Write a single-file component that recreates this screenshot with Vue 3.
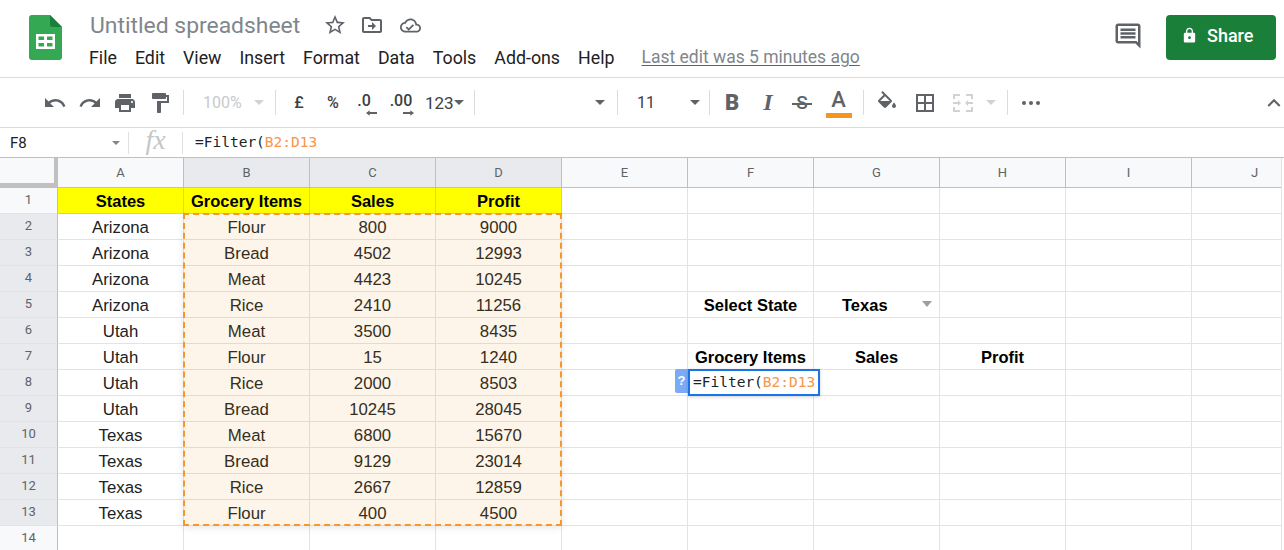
<script setup>
const menus = ['File', 'Edit', 'View', 'Insert', 'Format', 'Data', 'Tools', 'Add-ons', 'Help']
const columns = ['A', 'B', 'C', 'D', 'E', 'F', 'G', 'H', 'I', 'J']
const data = [
  ['Arizona', 'Flour', '800', '9000'],
  ['Arizona', 'Bread', '4502', '12993'],
  ['Arizona', 'Meat', '4423', '10245'],
  ['Arizona', 'Rice', '2410', '11256'],
  ['Utah', 'Meat', '3500', '8435'],
  ['Utah', 'Flour', '15', '1240'],
  ['Utah', 'Rice', '2000', '8503'],
  ['Utah', 'Bread', '10245', '28045'],
  ['Texas', 'Meat', '6800', '15670'],
  ['Texas', 'Bread', '9129', '23014'],
  ['Texas', 'Rice', '2667', '12859'],
  ['Texas', 'Flour', '400', '4500']
]
const rows = Array.from({ length: 14 }, (_, r) => {
  const cells = Array(10).fill('').map(() => ({ text: '', cls: '' }))
  if (r === 0) {
    ;['States', 'Grocery Items', 'Sales', 'Profit'].forEach((t, i) => {
      cells[i] = { text: t, cls: 'bold yellow' }
    })
  } else if (r <= 12) {
    data[r - 1].forEach((t, i) => {
      cells[i] = { text: t, cls: '' }
    })
  }
  if (r === 4) {
    cells[5] = { text: 'Select State', cls: 'bold' }
    cells[6] = { text: 'Texas', cls: 'bold drop' }
  }
  if (r === 6) {
    cells[5] = { text: 'Grocery Items', cls: 'bold' }
    cells[6] = { text: 'Sales', cls: 'bold' }
    cells[7] = { text: 'Profit', cls: 'bold' }
  }
  return cells
})
</script>

<template>
  <div class="app">
    <header class="top">
      <svg class="logo" viewBox="0 0 33 45" width="33" height="45">
        <path d="M3 0H21L33 12V42a3 3 0 0 1-3 3H3a3 3 0 0 1-3-3V3a3 3 0 0 1 3-3z" fill="#34a853" />
        <path d="M21 0L33 12H23a2 2 0 0 1-2-2z" fill="#188038" />
        <path d="M7 19H26V34H7zM9.5 21.5V25H15V21.5zM18 21.5V25H23.5V21.5zM9.5 28V31.5H15V28zM18 28V31.5H23.5V28z" fill="#fff" fill-rule="evenodd" />
      </svg>
      <div class="titles">
        <div class="title-row">
          <span class="doc-title">Untitled spreadsheet</span>
          <svg class="ic star" viewBox="0 0 24 24" width="24" height="24"><path d="M22 9.24l-7.19-.62L12 2 9.19 8.63 2 9.24l5.46 4.73L5.82 21 12 17.27 18.18 21l-1.63-7.03L22 9.24zM12 15.4l-3.76 2.27 1-4.28-3.32-2.88 4.38-.38L12 6.1l1.71 4.04 4.38.38-3.32 2.88 1 4.28L12 15.4z" /></svg>
          <svg class="ic move" viewBox="0 0 24 24" width="24" height="24"><path d="M20 6h-8l-2-2H4c-1.1 0-2 .9-2 2v12c0 1.1.9 2 2 2h16c1.1 0 2-.9 2-2V8c0-1.1-.9-2-2-2zm0 12H4V6h5.17l2 2H20v10zm-8-4H8v-2h4V9l4 4-4 4v-3z" /></svg>
          <svg class="ic cloud" viewBox="0 0 24 24" width="21" height="21"><path d="M19.35 10.04C18.67 6.59 15.64 4 12 4 9.11 4 6.6 5.64 5.35 8.04 2.34 8.36 0 10.91 0 14c0 3.31 2.69 6 6 6h13c2.76 0 5-2.24 5-5 0-2.64-2.05-4.78-4.65-4.96zM19 18H6c-2.21 0-4-1.79-4-4 0-2.05 1.53-3.76 3.56-3.97l1.07-.11.5-.95C8.08 7.14 9.94 6 12 6c2.62 0 4.88 1.86 5.39 4.43l.3 1.5 1.53.11c1.56.1 2.78 1.41 2.78 2.96 0 1.65-1.35 3-3 3zm-9-2.82l-2.09-2.09L6.5 14.5 10 18l6.01-6.01-1.41-1.41z" /></svg>
        </div>
        <nav class="menu-row">
          <span v-for="m in menus" :key="m" class="menu">{{ m }}</span>
          <span class="last-edit">Last edit was 5 minutes ago</span>
        </nav>
      </div>
      <svg class="ic comment" viewBox="0 0 24 24" width="30" height="30"><path d="M21.99 4c0-1.1-.89-2-1.99-2H4c-1.1 0-2 .9-2 2v12c0 1.1.9 2 2 2h14l4 4-.01-18zM20 4v13.17L18.83 16H4V4h16zM6 12h12v2H6zm0-3h12v2H6zm0-3h12v2H6z" /></svg>
      <button class="share">
        <svg viewBox="0 0 24 24" width="17" height="17"><path fill="#fff" d="M18 8h-1V6c0-2.76-2.24-5-5-5S7 3.24 7 6v2H6c-1.1 0-2 .9-2 2v10c0 1.1.9 2 2 2h12c1.1 0 2-.9 2-2V10c0-1.1-.9-2-2-2zm-6 9c-1.1 0-2-.9-2-2s.9-2 2-2 2 .9 2 2-.9 2-2 2zm3.1-9H8.9V6c0-1.71 1.39-3.1 3.1-3.1 1.71 0 3.1 1.39 3.1 3.1v2z" /></svg>
        <span>Share</span>
      </button>
    </header>

    <div class="toolbar">
      <span class="slot w35"><svg class="ic" viewBox="0 0 24 24" width="24" height="24"><path d="M12.5 8c-2.65 0-5.05.99-6.9 2.6L2 7v9h9l-3.62-3.62c1.39-1.16 3.16-1.88 5.12-1.88 3.54 0 6.55 2.31 7.6 5.5l2.37-.78C21.08 11.03 17.15 8 12.5 8z" /></svg></span>
      <span class="slot w35"><svg class="ic" viewBox="0 0 24 24" width="24" height="24"><path d="M18.4 10.6C16.55 8.99 14.15 8 11.5 8c-4.65 0-8.58 3.03-9.96 7.22L3.9 16c1.05-3.19 4.05-5.5 7.6-5.5 1.95 0 3.73.72 5.12 1.88L13 16h9V7l-3.6 3.6z" /></svg></span>
      <span class="slot w35"><svg class="ic" viewBox="0 0 24 24" width="24" height="24"><path d="M19 8H5c-1.66 0-3 1.34-3 3v6h4v4h12v-4h4v-6c0-1.66-1.34-3-3-3zm-3 11H8v-5h8v5zm3-7c-.55 0-1-.45-1-1s.45-1 1-1 1 .45 1 1-.45 1-1 1zm-1-9H6v4h12V3z" /></svg></span>
      <span class="slot w35"><svg class="ic" viewBox="0 0 24 24" width="24" height="24"><path d="M18 4V3c0-.55-.45-1-1-1H5c-.55 0-1 .45-1 1v4c0 .55.45 1 1 1h12c.55 0 1-.45 1-1V6h1v4H9v11c0 .55.45 1 1 1h2c.55 0 1-.45 1-1v-9h8V4h-3z" /></svg></span>
      <i class="sep ml6"></i>
      <span class="slot split w91"><span class="txt off-text">100%</span><i class="caret off mr11"></i></span>
      <i class="sep"></i>
      <span class="slot w46 txt m">£</span>
      <span class="slot w22 txt m">%</span>
      <span class="slot w40 txt m"><span class="dec">.0<svg class="arrow left" viewBox="0 0 12 6" width="11" height="6"><path d="M4 0L0 3l4 3V4h8V2H4z" /></svg></span></span>
      <span class="slot w34 txt m"><span class="dec">.00<svg class="arrow right" viewBox="0 0 12 6" width="11" height="6"><path d="M8 0l4 3-4 3V4H0V2h8z" /></svg></span></span>
      <span class="slot w56 start"><span class="txt num">123</span><i class="caret"></i></span>
      <i class="sep"></i>
      <span class="slot end w142"><i class="caret mr12"></i></span>
      <i class="sep"></i>
      <span class="slot split w91"><span class="txt size">11</span><i class="caret mr9"></i></span>
      <i class="sep"></i>
      <span class="slot w44 fmt bold-ic">B</span>
      <span class="slot w28 fmt italic-ic">I</span>
      <span class="slot w40 fmt"><span class="strike-ic">S</span></span>
      <span class="slot w33 fmt color-ic"><span>A</span><i class="orange"></i></span>
      <i class="sep ml8"></i>
      <span class="slot w46"><svg class="ic" viewBox="0 0 24 24" width="24" height="24"><path d="M16.56 8.94L7.62 0 6.21 1.41l2.38 2.38-5.15 5.15c-.59.59-.59 1.54 0 2.12l5.5 5.5c.29.29.68.44 1.06.44s.77-.15 1.06-.44l5.5-5.5c.59-.58.59-1.53 0-2.12zM5.21 10L10 5.21 14.79 10H5.21zM19 11.5s-2 2.17-2 3.5c0 1.1.9 2 2 2s2-.9 2-2c0-1.33-2-3.5-2-3.5z" /></svg></span>
      <span class="slot w30"><svg class="ic" viewBox="0 0 24 24" width="24" height="24"><path d="M3 3v18h18V3H3zm8 16H5v-6h6v6zm0-8H5V5h6v6zm8 8h-6v-6h6v6zm0-8h-6V5h6v6z" /></svg></span>
      <span class="slot w46"><svg class="ic off" viewBox="0 0 24 24" width="24" height="24"><path d="M2 3h7v2H4v3H2zM15 3h7v5h-2V5h-5zM2 16h2v3h5v2H2zM20 16h2v5h-7v-2h5zM2 11h5V9l3 3-3 3v-2H2zM22 11h-5V9l-3 3 3 3v-2h5z" /></svg></span>
      <i class="caret off"></i>
      <i class="sep ml11"></i>
      <span class="slot w46"><span class="dots"><i></i><i></i><i></i></span></span>
      <svg class="ic chevron" viewBox="0 0 24 24" width="26" height="26"><path d="M7.41 15.41L12 10.83l4.59 4.58L18 14l-6-6-6 6z" /></svg>
    </div>

    <div class="formula">
      <div class="namebox"><span>F8</span><i class="caret name-caret"></i></div>
      <i class="fsep"></i>
      <span class="fx">fx</span>
      <i class="fsep"></i>
      <span class="ftext">=Filter(<b>B2:D13</b></span>
    </div>

    <div class="sheet">
      <div class="corner"></div>
      <div v-for="(c, i) in columns" :key="c" class="colh" :class="{ sel: i >= 1 && i <= 3 }">{{ c }}</div>
      <template v-for="(row, r) in rows" :key="r">
        <div class="rowh" :class="{ sel: r >= 1 && r <= 12 }">{{ r + 1 }}</div>
        <div v-for="(cell, c) in row" :key="c" class="cell" :class="cell.cls">{{ cell.text }}</div>
      </template>
      <div class="range"></div>
      <div class="q">?</div>
      <div class="editor">=Filter(<b>B2:D13</b></div>
      <div class="scrollstrip"></div>
    </div>
  </div>
</template>

<style scoped>
.app { width: 1284px; height: 550px; overflow: hidden; background: #fff; font-family: Roboto, sans-serif; }
.ic { fill: #5f6368; display: block; flex: none; }
.ic.off { fill: #d0d2d4; }

.top { height: 77px; border-bottom: 1px solid #dadce0; display: flex; box-sizing: content-box; }
.logo { margin: 15px 0 0 29px; flex: none; }
.titles { margin-left: 27px; flex: 1; }
.title-row { height: 41px; display: flex; align-items: center; padding: 9px 0 0 1px; box-sizing: border-box; }
.doc-title { font-size: 22.9px; color: #80868b; width: 210px; white-space: nowrap; }
.star { margin-left: 23px; }
.move { margin-left: 13px; }
.cloud { margin-left: 16px; }
.menu-row { display: flex; align-items: center; height: 24px; margin-top: 4px; font-size: 17.8px; color: #202124; }
.menu { margin-right: 18px; white-space: nowrap; }
.last-edit { margin-left: 9px; font-size: 17.5px; color: #80868b; white-space: nowrap; text-decoration: underline; text-underline-offset: 2px; text-decoration-color: #5f6368; }
.comment { margin: 21px 23px 0 0; }
.share { margin: 15px 8px 0 0; width: 110px; height: 45px; border: 0; border-radius: 4px; background: #1a8039; color: #fff; font-family: Roboto, sans-serif; font-size: 18px; font-weight: 500; display: flex; align-items: center; justify-content: flex-start; gap: 9px; padding: 0 0 5px 15px; box-sizing: border-box; }

.toolbar { height: 49px; border-bottom: 1px solid #dadce0; display: flex; align-items: center; padding-left: 37px; box-sizing: content-box; }
.slot { display: flex; align-items: center; justify-content: center; flex: none; position: relative; height: 30px; box-sizing: border-box; }
.w22 { width: 22px; } .w28 { width: 28px; } .w30 { width: 30px; } .w33 { width: 33px; } .w34 { width: 34px; } .w35 { width: 35px; } .w40 { width: 40px; } .w44 { width: 44px; } .w46 { width: 46px; } .w56 { width: 56px; } .w91 { width: 91px; } .w142 { width: 142px; }
.split { justify-content: space-between; padding-left: 19px; }
.start { justify-content: flex-start; padding-left: 7px; }
.end { justify-content: flex-end; }
.txt { font-size: 16px; color: #3c4043; }
.m { font-weight: 500; }
.off-text { color: #c8cacd; }
.num { font-size: 17px; margin-right: 0; }
.sep { flex: none; width: 1px; height: 25px; background: #dadce0; }
.ml6 { margin-left: 6px; } .ml8 { margin-left: 8px; } .ml11 { margin-left: 11px; }
.caret { flex: none; width: 0; height: 0; border: 5px solid transparent; border-top: 5px solid #5f6368; border-bottom: 0; }
.caret.off { border-top-color: #d0d2d4; }
.mr9 { margin-right: 9px; } .mr11 { margin-right: 11px; } .mr12 { margin-right: 12px; }
.dec { position: relative; display: block; line-height: 20px; margin-top: -3px; }
.arrow { position: absolute; fill: #5f6368; top: 19px; }
.arrow.left { left: 9px; }
.arrow.right { left: 13px; }
.fmt { color: #5f6368; font-size: 21px; }
.bold-ic { font-family: Roboto, sans-serif; font-weight: 900; font-size: 22px; }
.italic-ic { font-family: "Liberation Serif", serif; font-weight: 700; font-style: italic; font-size: 24px; }
.strike-ic { position: relative; font-family: Roboto, sans-serif; font-weight: 500; font-size: 19px; display: block; }
.strike-ic::after { content: ""; position: absolute; left: -4px; right: -4px; top: 50%; height: 2px; background: #5f6368; }
.color-ic { font-family: Roboto, sans-serif; font-weight: 500; font-size: 22px; }
.color-ic span { margin-top: -6px; }
.orange { position: absolute; left: 4px; top: 25px; width: 26px; height: 5px; background: #f6941c; }
.dots { display: flex; gap: 3px; }
.dots i { width: 4px; height: 4px; border-radius: 50%; background: #5f6368; }
.chevron { margin: 0 -3px 0 auto; }

.formula { height: 29px; border-bottom: 1px solid #c0c0c0; display: flex; align-items: center; box-sizing: content-box; }
.namebox { width: 128px; box-sizing: border-box; padding: 0 8px 0 10px; display: flex; align-items: center; justify-content: space-between; font-size: 15px; color: #202124; flex: none; }
.name-caret { border-width: 4px; border-bottom: 0; border-top-color: #80868b; }
.fsep { width: 1px; height: 22px; background: #e0e0e0; flex: none; }
.fx { width: 53px; flex: none; text-align: center; font-family: "Liberation Serif", serif; font-style: italic; font-size: 28px; color: #c4c7c9; line-height: 24px; padding-bottom: 5px; }
.ftext { margin-left: 12px; font-family: "DejaVu Sans Mono", monospace; font-size: 14.5px; color: #202124; padding-bottom: 1px; }
.ftext b, .editor b { font-weight: 400; color: #f7954a; }

.sheet { position: relative; display: grid; grid-template-columns: 58px repeat(10, 126px); grid-template-rows: 30px repeat(14, 26px); }
.corner { background: #f8f9fa; border-right: 4px solid #c0c0c0; border-bottom: 5px solid #c0c0c0; box-sizing: border-box; }
.colh { background: #f8f9fa; border-right: 1px solid #c0c0c0; border-bottom: 1px solid #c0c0c0; font-size: 13px; color: #5f6368; display: flex; align-items: center; justify-content: center; box-sizing: border-box; padding-bottom: 1px; }
.colh.sel, .rowh.sel { background: #e8eaed; }
.rowh { background: #f8f9fa; border-right: 1px solid #c0c0c0; border-bottom: 1px solid #e2e3e3; font-size: 13px; color: #5f6368; display: flex; align-items: center; justify-content: center; box-sizing: border-box; padding-bottom: 2px; }
.cell { border-right: 1px solid #e2e3e3; border-bottom: 1px solid #e2e3e3; box-sizing: border-box; font-family: "Liberation Sans", Arial, sans-serif; font-size: 16.8px; color: #222; text-align: center; line-height: 27px; white-space: nowrap; position: relative; }
.cell.bold { font-weight: 700; color: #000; font-size: 16.5px; }
.cell.yellow { background: #ff0; border-color: #e2e200; }
.cell.drop { text-align: left; padding-left: 28px; }
.cell.drop::after { content: ""; position: absolute; right: 7px; top: 9px; border: 5.5px solid transparent; border-top: 6px solid #9aa0a6; border-bottom: 0; }

.range { position: absolute; left: 183px; top: 55px; width: 379px; height: 313px; box-sizing: border-box; border: 2px dashed #f6962b; background: rgba(235, 160, 40, 0.1); box-shadow: 0 2px 6px rgba(60, 64, 67, 0.12); }
.q { position: absolute; left: 675px; top: 211px; width: 13px; height: 24px; background: #7baaf7; color: #fff; font: 700 13px/24px "Liberation Sans", sans-serif; text-align: center; border-radius: 2px 0 0 2px; }
.editor { position: absolute; left: 688px; top: 211px; width: 132px; height: 27px; box-sizing: border-box; border: 2px solid #1a73e8; background: #fff; font-family: "DejaVu Sans Mono", monospace; font-size: 14.5px; line-height: 22px; padding-left: 3px; color: #202124; white-space: nowrap; box-shadow: 0 1px 3px rgba(60, 64, 67, .25); }
.scrollstrip { position: absolute; left: 1281px; top: 0; width: 3px; height: 392px; background: #fff; border-left: 1px solid #e2e3e3; box-sizing: border-box; }
</style>
